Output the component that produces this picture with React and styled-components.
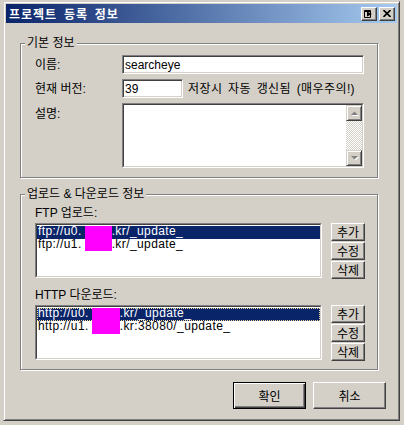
import React from "react";
import styled, { createGlobalStyle, css } from "styled-components";

const FACE = "#d4d0c8";
const SHADOW = "#808080";
const DARK = "#404040";
const SEL = "#0a246a";

const Global = createGlobalStyle`
  html, body { margin: 0; padding: 0; background: ${FACE}; }
  body {
    font-family: "Liberation Sans", "Noto Sans CJK KR", sans-serif;
    font-size: 12px;
    color: #000;
  }
  *, *::before, *::after { box-sizing: border-box; }
`;

const raised = css`
  background: ${FACE};
  border: 1px solid;
  border-color: #fff ${DARK} ${DARK} #fff;
  box-shadow: inset -1px -1px ${SHADOW};
`;

const Window = styled.div`
  width: 397px;
  height: 420px;
  margin: 1px 0 0 3px;
  padding: 2px;
  display: flex;
  flex-direction: column;
  background: ${FACE};
  border: 1px solid;
  border-color: ${FACE} ${DARK} ${DARK} ${FACE};
  box-shadow: inset 1px 1px #fff, inset -1px -1px ${SHADOW};
`;

const TitleBar = styled.div`
  height: 19px;
  display: flex;
  align-items: center;
  gap: 2px;
  padding: 0 2px 0 3px;
  background: linear-gradient(to right, ${SEL}, #a6caf0);
`;

const Title = styled.span`
  flex: 1;
  color: #fff;
  font-family: "Noto Sans CJK KR", sans-serif;
  font-weight: 700;
  font-size: 12px;
  letter-spacing: 1px;
  word-spacing: 3px;
  line-height: 19px;
  white-space: nowrap;
`;

const CapButton = styled.button`
  ${raised};
  width: 16px;
  height: 14px;
  padding: 0;
  margin: 0;
  display: flex;
  align-items: center;
  justify-content: center;
`;

const Client = styled.div`
  flex: 1;
  display: flex;
  flex-direction: column;
  padding: 20px 11px 0 14px;
`;

const Group = styled.section`
  position: relative;
  width: 358px;
  margin-top: ${(p) => p.$mt || 0}px;
  border: 1px solid ${SHADOW};
  box-shadow: inset 1px 1px #fff, 1px 1px #fff;
`;

const Legend = styled.span`
  position: absolute;
  top: -8px;
  left: 4px;
  padding: 0 2px;
  background: ${FACE};
  line-height: 14px;
  white-space: nowrap;
`;

const FormGrid = styled.div`
  display: grid;
  grid-template-columns: 87px 242px;
  row-gap: 5px;
  align-items: center;
  padding: 11px 13px 9px 14px;
`;

const Label = styled.span`
  line-height: 14px;
  white-space: nowrap;
  align-self: ${(p) => (p.$top ? "start" : "center")};
  padding-top: ${(p) => (p.$top ? 4 : 0)}px;
`;

const TextInput = styled.input`
  width: ${(p) => p.$w || 242}px;
  height: 19px;
  margin: 0;
  padding: 0 0 0 2px;
  font: inherit;
  font-size: 12px;
  color: #000;
  background: #fff;
  border: 1px solid;
  border-color: ${SHADOW} #fff #fff ${SHADOW};
  box-shadow: inset 1px 1px ${DARK}, inset -1px -1px ${FACE};
  outline: none;
`;

const InlineRow = styled.div`
  display: flex;
  align-items: center;
  gap: 5px;
`;

const Note = styled.span`
  white-space: nowrap;
  line-height: 14px;
  letter-spacing: 0.4px;
  word-spacing: 2px;
`;

const Sunken = styled.div`
  width: ${(p) => p.$w}px;
  height: ${(p) => p.$h}px;
  display: flex;
  border: 1px solid;
  border-color: ${SHADOW} #fff #fff ${SHADOW};
`;

const SunkenInner = styled.div`
  flex: 1;
  display: flex;
  position: relative;
  overflow: hidden;
  background: #fff;
  border: 1px solid;
  border-color: ${DARK} ${FACE} ${FACE} ${DARK};
`;

const TextBody = styled.div`
  flex: 1;
`;

const ScrollBar = styled.div`
  width: 16px;
  display: flex;
  flex-direction: column;
`;

const ScrollArrow = styled.div`
  width: 16px;
  height: 16px;
  display: flex;
  align-items: center;
  justify-content: center;
  background: ${FACE};
  border: 1px solid;
  border-color: ${FACE} ${DARK} ${DARK} ${FACE};
  box-shadow: inset 1px 1px #fff, inset -1px -1px ${SHADOW};
`;

const ScrollTrack = styled.div`
  flex: 1;
  background-image: repeating-conic-gradient(#fff 0 25%, ${FACE} 0 50%);
  background-size: 2px 2px;
`;

const GroupBody = styled.div`
  display: flex;
  flex-direction: column;
  padding: 11px 12px 8px 14px;
`;

const SectionLabel = styled.div`
  line-height: 14px;
  margin-top: ${(p) => p.$mt || 0}px;
  white-space: nowrap;
`;

const ListRow = styled.div`
  display: flex;
  gap: 9px;
  margin-top: 3px;
`;

const List = styled.div`
  flex: 1;
  display: flex;
  flex-direction: column;
  padding-top: 1px;
`;

const Item = styled.div`
  height: 13px;
  line-height: 11px;
  padding-left: 1px;
  white-space: nowrap;
  letter-spacing: 0.4px;
  background: ${(p) => (p.$selected ? SEL : "transparent")};
  color: ${(p) => (p.$selected ? "#fff" : "#000")};
  outline: ${(p) => (p.$focused ? "1px dotted #f5db95" : "none")};
  outline-offset: -1px;
`;

const Hidden = styled.span`
  display: inline-block;
  width: ${(p) => p.$w}px;
`;

const Redact = styled.div`
  position: absolute;
  left: ${(p) => p.$x}px;
  top: ${(p) => p.$y}px;
  width: ${(p) => p.$w}px;
  height: ${(p) => p.$h}px;
  background: #ff00ff;
`;

const SideButtons = styled.div`
  display: flex;
  flex-direction: column;
  gap: 1px;
`;

const SmallButton = styled.button`
  ${raised};
  width: 34px;
  height: 18px;
  padding: 0;
  margin: 0;
  font-family: "Noto Sans CJK KR", sans-serif;
  font-size: 12px;
  line-height: 14px;
  color: #000;
`;

const Footer = styled.div`
  display: flex;
  justify-content: flex-end;
  gap: 7px;
  margin-top: 12px;
`;

const PushButton = styled.button`
  width: 73px;
  height: 27px;
  padding: 0;
  margin: 0;
  font-family: "Noto Sans CJK KR", sans-serif;
  font-size: 12px;
  color: #000;
  background: ${FACE};
  border: 1px solid;
  ${(p) =>
    p.$default
      ? css`
          border-color: #000;
          box-shadow: inset 1px 1px #fff, inset -1px -1px ${DARK},
            inset -2px -2px ${SHADOW};
        `
      : css`
          border-color: #fff ${DARK} ${DARK} #fff;
          box-shadow: inset -1px -1px ${SHADOW};
        `}
`;

const Arrow = ({ up }) => (
  <svg width="9" height="6" viewBox="0 0 9 6">
    <polygon
      points={up ? "1,5 8,5 4.5,1.5" : "1,1 8,1 4.5,4.5"}
      transform="translate(1 1)"
      fill="#fff"
    />
    <polygon points={up ? "1,5 8,5 4.5,1.5" : "1,1 8,1 4.5,4.5"} fill={SHADOW} />
  </svg>
);

const TrayIcon = () => (
  <svg width="10" height="8" viewBox="0 0 10 8">
    <path d="M0.5 0.5h6v7h-6z" fill="none" stroke="#000" />
    <path d="M0.5 1.5h6" stroke="#000" />
    <polygon points="3,1.5 3,6.5 8,4" fill="#000" />
  </svg>
);

const CloseIcon = () => (
  <svg width="8" height="7" viewBox="0 0 8 7">
    <path d="M0.5 0 L7.5 7 M7.5 0 L0.5 7" stroke="#000" strokeWidth="1.6" />
  </svg>
);

const ftpItems = [
  { pre: "ftp://u0.", post: ".kr/_update_", selected: true },
  { pre: "ftp://u1.", post: ".kr/_update_" },
];

const httpItems = [
  { pre: "http://u0.", post: ".kr/_update_", selected: true, focused: true },
  { pre: "http://u1.", post: ".kr:38080/_update_" },
];

const UrlList = ({ items, gap, redact }) => (
  <Sunken $w={287} $h={55}>
    <SunkenInner>
      <List>
        {items.map((it, i) => (
          <Item key={i} $selected={it.selected} $focused={it.focused}>
            {it.pre}
            <Hidden $w={gap} />
            {it.post}
          </Item>
        ))}
      </List>
      <Redact $x={redact.x} $y={redact.y} $w={redact.w} $h={redact.h} />
    </SunkenInner>
  </Sunken>
);

const EditButtons = () => (
  <SideButtons>
    <SmallButton>추가</SmallButton>
    <SmallButton>수정</SmallButton>
    <SmallButton>삭제</SmallButton>
  </SideButtons>
);

export default function App() {
  return (
    <>
      <Global />
      <Window>
        <TitleBar>
          <Title>프로젝트 등록 정보</Title>
          <CapButton aria-label="tray">
            <TrayIcon />
          </CapButton>
          <CapButton aria-label="close">
            <CloseIcon />
          </CapButton>
        </TitleBar>
        <Client>
          <Group>
            <Legend>기본 정보</Legend>
            <FormGrid>
              <Label>이름:</Label>
              <TextInput defaultValue="searcheye" readOnly />
              <Label>현재 버전:</Label>
              <InlineRow>
                <TextInput $w={61} defaultValue="39" readOnly />
                <Note>저장시 자동 갱신됨 (매우주의!)</Note>
              </InlineRow>
              <Label $top>설명:</Label>
              <Sunken $w={242} $h={65}>
                <SunkenInner>
                  <TextBody />
                  <ScrollBar>
                    <ScrollArrow>
                      <Arrow up />
                    </ScrollArrow>
                    <ScrollTrack />
                    <ScrollArrow>
                      <Arrow />
                    </ScrollArrow>
                  </ScrollBar>
                </SunkenInner>
              </Sunken>
            </FormGrid>
          </Group>

          <Group $mt={16}>
            <Legend>업로드 &amp; 다운로드 정보</Legend>
            <GroupBody>
              <SectionLabel>FTP 업로드:</SectionLabel>
              <ListRow>
                <UrlList
                  items={ftpItems}
                  gap={30}
                  redact={{ x: 48, y: 1, w: 27, h: 25 }}
                />
                <EditButtons />
              </ListRow>
              <SectionLabel $mt={9}>HTTP 다운로드:</SectionLabel>
              <ListRow>
                <UrlList
                  items={httpItems}
                  gap={31}
                  redact={{ x: 55, y: 1, w: 28, h: 26 }}
                />
                <EditButtons />
              </ListRow>
            </GroupBody>
          </Group>

          <Footer>
            <PushButton $default>확인</PushButton>
            <PushButton>취소</PushButton>
          </Footer>
        </Client>
      </Window>
    </>
  );
}
